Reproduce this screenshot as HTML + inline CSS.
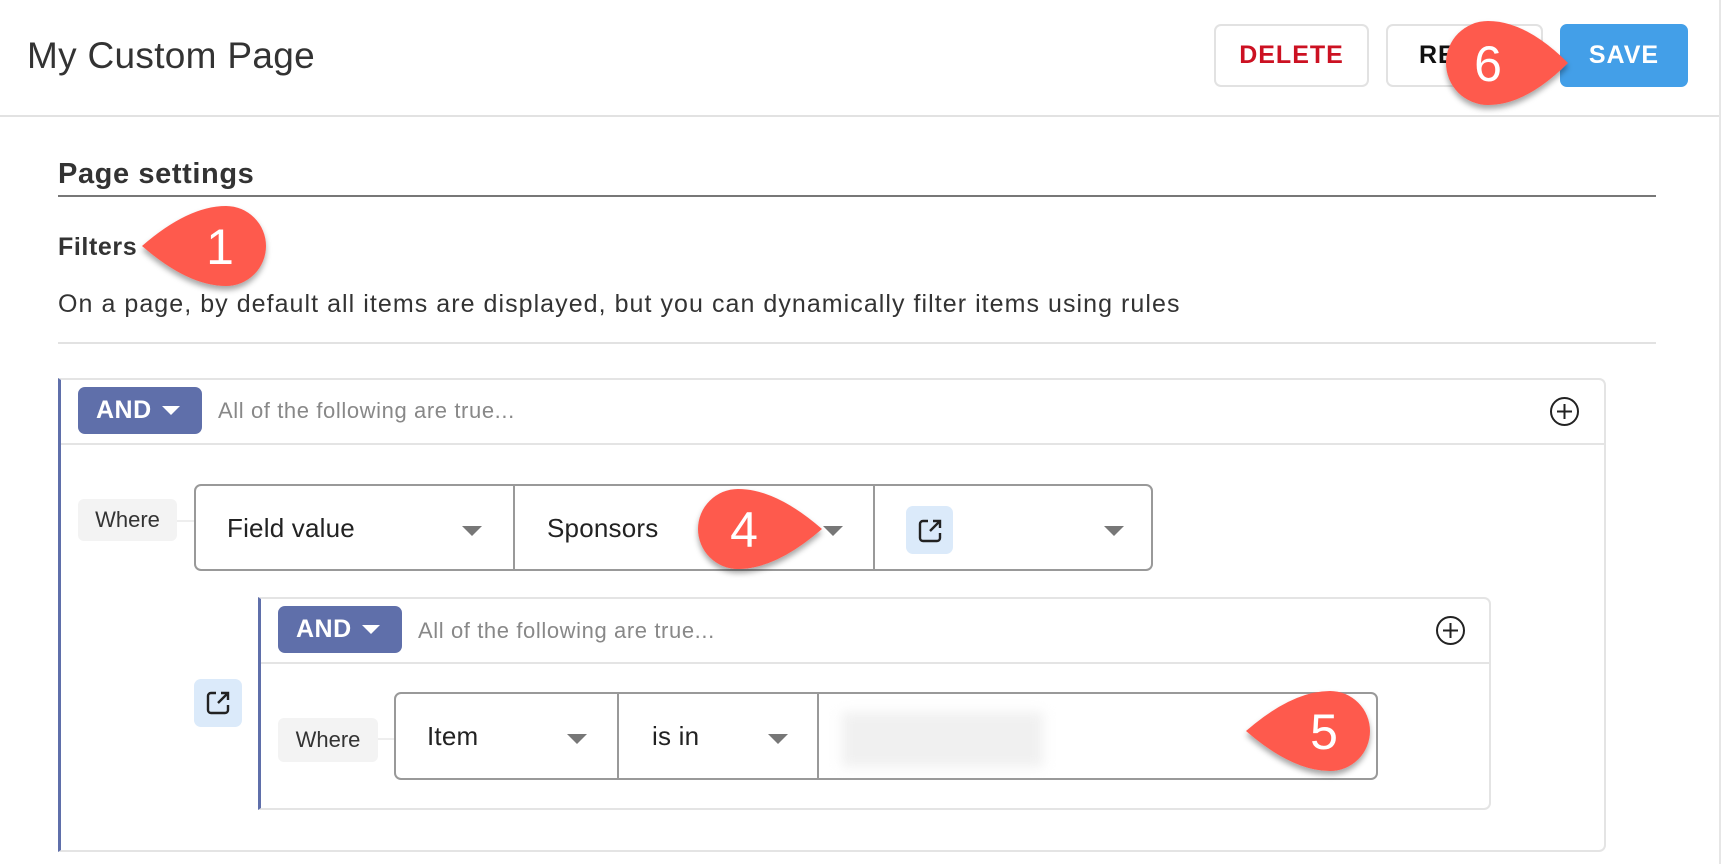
<!DOCTYPE html>
<html><head><meta charset="utf-8"><style>
*{box-sizing:border-box;margin:0;padding:0}
body{width:1726px;height:864px;background:#fff;font-family:"Liberation Sans",sans-serif;color:#333;position:relative;overflow:hidden}
.a{position:absolute}
.btn{position:absolute;border:2px solid #e2e2e2;border-radius:7px;background:#fff;font-weight:bold;font-size:25px;display:flex;align-items:center;justify-content:center;letter-spacing:1px}
.and{position:absolute;background:#5f6faa;color:#fff;border-radius:7px;font-weight:bold;font-size:25px;display:flex;align-items:center;padding-left:18px;letter-spacing:.5px}
.tri{display:inline-block;width:0;height:0;border-left:9px solid transparent;border-right:9px solid transparent;border-top:9px solid #fff;margin-left:10px}
.gtri{position:absolute;width:0;height:0;border-left:10px solid transparent;border-right:10px solid transparent;border-top:10px solid #777}
.hint{position:absolute;color:#888;font-size:22px;letter-spacing:.6px}
.where{position:absolute;background:#f3f3f3;border-radius:6px;font-size:22px;color:#333;display:flex;align-items:center;justify-content:center}
.sel{position:absolute;border:2px solid #999;border-radius:7px;background:#fff}
.dv{position:absolute;top:0;bottom:0;width:2px;background:#999}
.st{position:absolute;font-size:26px;color:#222;letter-spacing:.2px}
.ib{position:absolute;background:#dbeafa;border-radius:7px}
</style></head><body>
<div class="a" style="left:27px;top:35px;font-size:37px;color:#333;letter-spacing:.3px">My Custom Page</div>
<div class="a" style="left:0;top:115px;width:1720px;height:2px;background:#e2e2e2"></div>
<div class="a" style="left:1719px;top:0;width:2px;height:864px;background:#e6e6e6"></div>
<div class="btn" style="left:1214px;top:24px;width:155px;height:63px;color:#cc1122">DELETE</div>
<div class="btn" style="left:1386px;top:24px;width:157px;height:63px;color:#111;justify-content:flex-start;padding-left:31px">RESET</div>
<div class="btn" style="left:1560px;top:24px;width:128px;height:63px;background:#439fe8;border-color:#439fe8;color:#fff">SAVE</div>

<div class="a" style="left:58px;top:158px;font-size:29px;font-weight:bold;color:#333;letter-spacing:.6px">Page settings</div>
<div class="a" style="left:58px;top:195px;width:1598px;height:2px;background:#777"></div>
<div class="a" style="left:58px;top:233px;font-size:25px;font-weight:bold;color:#333;letter-spacing:.6px">Filters</div>
<div class="a" style="left:58px;top:290px;font-size:25px;color:#333;letter-spacing:1.05px">On a page, by default all items are displayed, but you can dynamically filter items using rules</div>
<div class="a" style="left:58px;top:342px;width:1598px;height:2px;background:#e2e2e2"></div>

<div class="a" style="left:58px;top:378px;width:1548px;height:474px;border:2px solid #e4e4e4;border-left:3px solid #5f6faa;border-radius:0 7px 7px 0"></div>
<div class="a" style="left:61px;top:443px;width:1543px;height:2px;background:#e4e4e4"></div>
<div class="and" style="left:78px;top:387px;width:124px;height:47px">AND<span class="tri"></span></div>
<div class="hint" style="left:218px;top:398px">All of the following are true...</div>
<svg class="a" style="left:1549px;top:396px" width="31" height="31" viewBox="0 0 31 31"><circle cx="15.5" cy="15.5" r="13.5" fill="none" stroke="#222" stroke-width="2"/><path d="M15.5 8v15M8 15.5h15" stroke="#222" stroke-width="2"/></svg>

<div class="where" style="left:78px;top:499px;width:99px;height:42px">Where</div>
<div class="a" style="left:177px;top:520px;width:18px;height:2px;background:#eee"></div>
<div class="sel" style="left:194px;top:484px;width:959px;height:87px">
<div class="dv" style="left:317px"></div><div class="dv" style="left:677px"></div>
<div class="st" style="left:31px;top:27px">Field value</div><div class="gtri" style="left:266px;top:40px"></div>
<div class="st" style="left:351px;top:27px">Sponsors</div><div class="gtri" style="left:627px;top:40px"></div>
<div class="ib" style="left:710px;top:20px;width:47px;height:48px"></div>
<svg class="a" style="left:720px;top:31px" width="28" height="28" viewBox="0 0 28 28"><path d="M12 4H7a3 3 0 0 0-3 3v14a3 3 0 0 0 3 3h14a3 3 0 0 0 3-3v-5" fill="none" stroke="#222" stroke-width="2.4"/><path d="M14 14L24 4M17 4h7v7" fill="none" stroke="#222" stroke-width="2.4"/></svg>
<div class="gtri" style="left:908px;top:40px"></div>
</div>

<div class="ib" style="left:194px;top:679px;width:48px;height:48px"></div>
<svg class="a" style="left:204px;top:689px" width="28" height="28" viewBox="0 0 28 28"><path d="M12 4H7a3 3 0 0 0-3 3v14a3 3 0 0 0 3 3h14a3 3 0 0 0 3-3v-5" fill="none" stroke="#222" stroke-width="2.4"/><path d="M14 14L24 4M17 4h7v7" fill="none" stroke="#222" stroke-width="2.4"/></svg>
<div class="a" style="left:258px;top:597px;width:1233px;height:213px;border:2px solid #e4e4e4;border-left:3px solid #5f6faa;border-radius:0 7px 7px 0"></div>
<div class="a" style="left:261px;top:662px;width:1228px;height:2px;background:#e4e4e4"></div>
<div class="and" style="left:278px;top:606px;width:124px;height:47px">AND<span class="tri"></span></div>
<div class="hint" style="left:418px;top:618px">All of the following are true...</div>
<svg class="a" style="left:1435px;top:615px" width="31" height="31" viewBox="0 0 31 31"><circle cx="15.5" cy="15.5" r="13.5" fill="none" stroke="#222" stroke-width="2"/><path d="M15.5 8v15M8 15.5h15" stroke="#222" stroke-width="2"/></svg>
<div class="where" style="left:278px;top:718px;width:100px;height:44px">Where</div>
<div class="a" style="left:378px;top:738px;width:17px;height:2px;background:#eee"></div>
<div class="sel" style="left:394px;top:692px;width:984px;height:88px">
<div class="dv" style="left:221px"></div><div class="dv" style="left:421px"></div>
<div class="st" style="left:31px;top:27px">Item</div><div class="gtri" style="left:171px;top:40px"></div>
<div class="st" style="left:256px;top:27px">is in</div><div class="gtri" style="left:372px;top:40px"></div>
<div class="a" style="left:446px;top:18px;width:201px;height:55px;background:#f0f0f0;filter:blur(6px)"></div>
</div>

<svg class="a" style="left:0;top:0" width="1726" height="864">
<defs><filter id="sh" x="-30%" y="-30%" width="160%" height="170%"><feDropShadow dx="0" dy="4" stdDeviation="3" flood-color="#000" flood-opacity=".35"/></filter></defs>
<g font-family="Liberation Sans, sans-serif" font-size="50" fill="#fff" text-anchor="middle">
<g transform="translate(226,246)"><path filter="url(#sh)" fill="#fe5a4d" d="M-84 0Q-38 -40 0 -40A40 40 0 1 1 0 40Q-38 40 -84 0Z"/><text x="-6" y="18">1</text></g>
<g transform="translate(738,529)"><path filter="url(#sh)" fill="#fe5a4d" transform="scale(-1,1)" d="M-84 0Q-38 -40 0 -40A40 40 0 1 1 0 40Q-38 40 -84 0Z"/><text x="6" y="18">4</text></g>
<g transform="translate(1330,731)"><path filter="url(#sh)" fill="#fe5a4d" d="M-84 0Q-38 -40 0 -40A40 40 0 1 1 0 40Q-38 40 -84 0Z"/><text x="-6" y="18">5</text></g>
<g transform="translate(1488,63)"><path filter="url(#sh)" fill="#fe5a4d" transform="scale(-1,1)" d="M-80 0Q-38 -42 0 -42A42 42 0 1 1 0 42Q-38 42 -80 0Z"/><text x="0" y="18">6</text></g>
</g></svg>
</body></html>
